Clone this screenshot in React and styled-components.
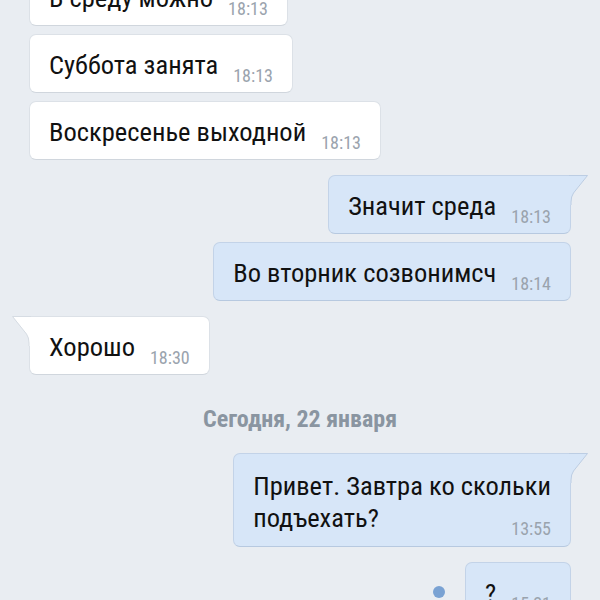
import React from 'react'
import styled, { createGlobalStyle } from 'styled-components'

const GlobalStyle = createGlobalStyle`
  html, body {
    margin: 0;
    padding: 0;
    background: #e9edf2;
  }
  body {
    font-family: "Roboto Condensed", Roboto, "Noto Sans", sans-serif;
    overflow: hidden;
  }
`

const messages = [
  { id: 1, side: 'in', text: 'В среду можно', time: '18:13' },
  { id: 2, side: 'in', text: 'Суббота занята', time: '18:13' },
  { id: 3, side: 'in', text: 'Воскресенье выходной', time: '18:13' },
  { id: 4, side: 'out', text: 'Значит среда', time: '18:13', tail: true, gap: 15 },
  { id: 5, side: 'out', text: 'Во вторник созвонимсч', time: '18:14' },
  { id: 6, side: 'in', text: 'Хорошо', time: '18:30', tail: true, gap: 15 },
  { id: 'd', date: 'Сегодня, 22 января' },
  { id: 7, side: 'out', text: 'Привет. Завтра ко скольки\nподъехать?', time: '13:55', tail: true, gap: 0 },
  { id: 8, side: 'out', text: '?', time: '15:21', gap: 15, unread: true },
]

function Tail({ side }) {
  const out = side === 'out'
  const fill = out ? '#d7e6f8' : '#ffffff'
  const stroke = out ? '#bccde3' : '#d6dce3'
  return (
    <TailSvg $side={side} width="20" height="30" viewBox="0 0 20 30">
      <g transform={out ? '' : 'translate(20 0) scale(-1 1)'}>
        <path d="M0 0 H18.5 L4.5 18 Q2 21.5 2 27 V30 H0 Z" fill={fill} />
        <path d="M0 0.5 H18.5 L4.5 18 Q2 21.5 2 27 V30" fill="none" stroke={stroke} strokeWidth="1" />
      </g>
    </TailSvg>
  )
}

export default function App() {
  return (
    <>
      <GlobalStyle />
      <Feed>
        {messages.map((m) =>
          m.date ? (
            <DateRow key={m.id}>{m.date}</DateRow>
          ) : (
            <Row key={m.id} $side={m.side} $gap={m.gap}>
              {m.unread && <UnreadDot />}
              <Bubble $side={m.side} $tail={m.tail} $multi={m.text.includes('\n')}>
                {m.tail && <Tail side={m.side} />}
                {m.text}
                <Time>{m.time}</Time>
              </Bubble>
            </Row>
          )
        )}
      </Feed>
    </>
  )
}

const Feed = styled.div`
  display: flex;
  flex-direction: column;
  margin-top: -33px;
  padding: 0 29px;
`

const Row = styled.div`
  display: flex;
  align-items: center;
  justify-content: ${(p) => (p.$side === 'out' ? 'flex-end' : 'flex-start')};
  gap: 20px;
  margin-top: ${(p) => p.$gap ?? 8}px;
  &:first-child {
    margin-top: 0;
  }
`

const Bubble = styled.div`
  position: relative;
  display: flow-root;
  padding: ${(p) => (p.$multi ? '16px 19px 12px' : '14px 19px 11px')};
  font-size: 26.5px;
  line-height: 32px;
  white-space: pre-line;
  color: #111;
  background: ${(p) => (p.$side === 'out' ? '#d7e6f8' : '#ffffff')};
  border: 1px solid ${(p) => (p.$side === 'out' ? '#c3d3e8' : '#dce1e7')};
  border-bottom-color: ${(p) => (p.$side === 'out' ? '#b7c9e0' : '#d0d6dd')};
  border-radius: 7px;
  ${(p) =>
    p.$tail &&
    (p.$side === 'out' ? 'border-top-right-radius: 0;' : 'border-top-left-radius: 0;')}
`

const TailSvg = styled.svg`
  position: absolute;
  top: -1px;
  ${(p) => (p.$side === 'out' ? 'right: -19px;' : 'left: -19px;')}
`

const Time = styled.span`
  float: right;
  margin: 17px 0 -17px 15px;
  font-size: 18px;
  line-height: 20px;
  color: #9aa3ad;
`

const UnreadDot = styled.span`
  width: 12px;
  height: 12px;
  border-radius: 50%;
  background: #7aa2d3;
`

const DateRow = styled.div`
  padding: 31px 0 21px;
  text-align: center;
  font-size: 24px;
  line-height: 26px;
  font-weight: 700;
  color: #8a95a1;
`
